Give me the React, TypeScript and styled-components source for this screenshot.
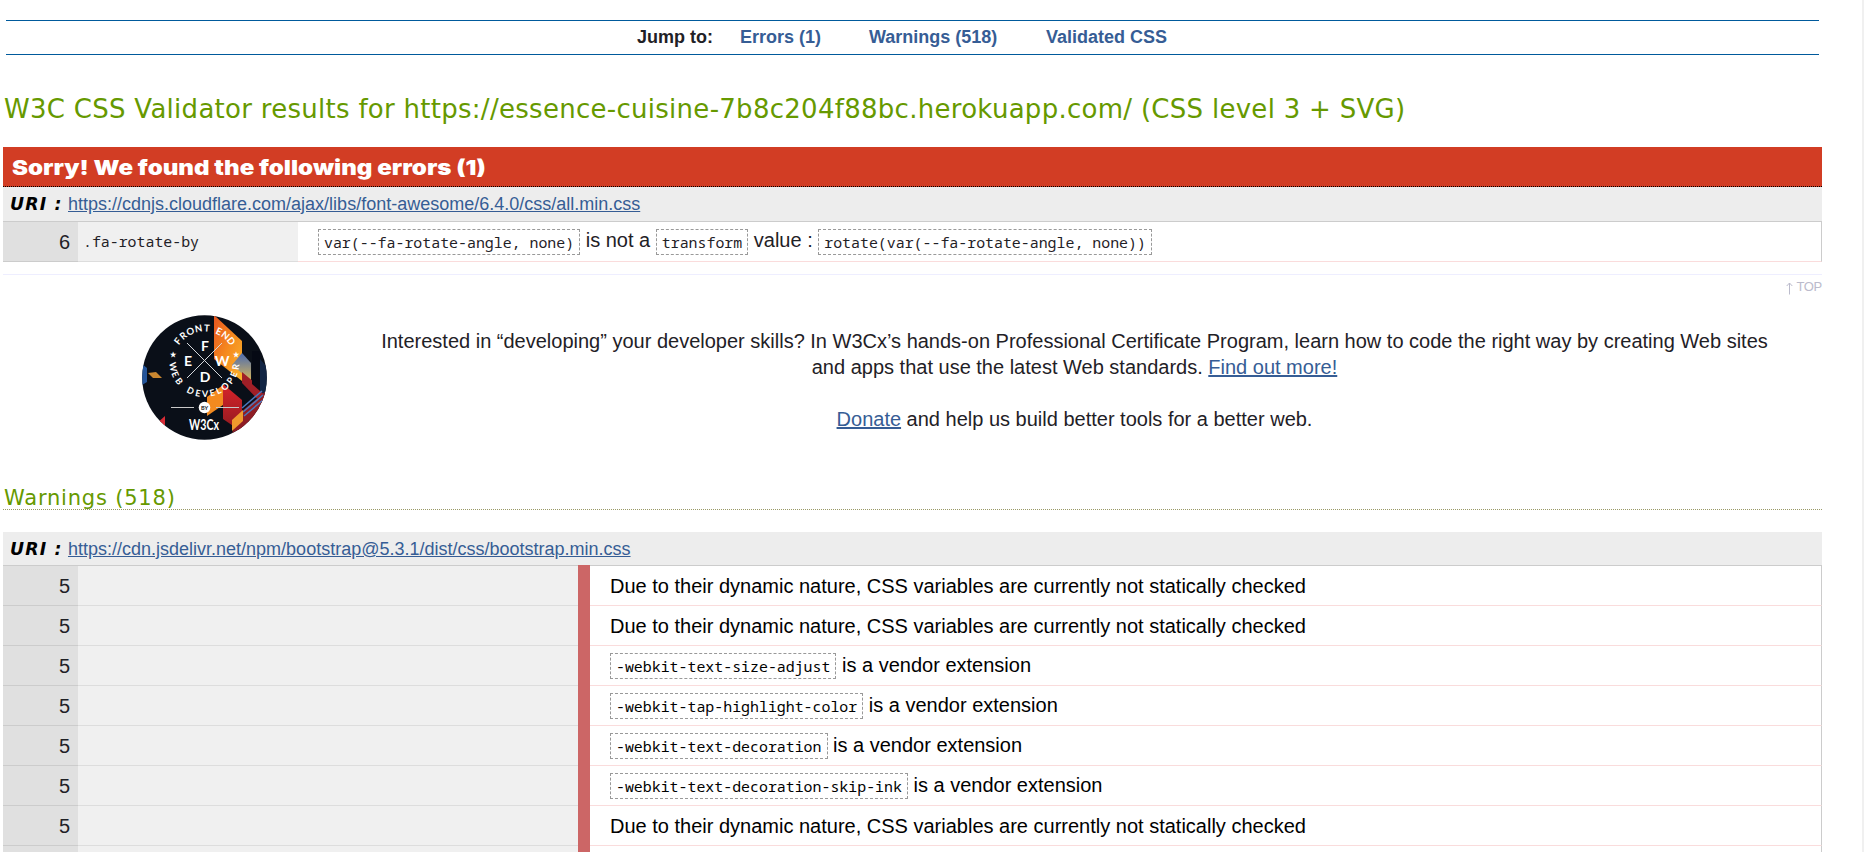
import React from 'react';
import styled, { createGlobalStyle } from 'styled-components';

const Global = createGlobalStyle`
  body { margin: 0; background: #fff; overflow: hidden; color: #1f2126; font-family: "Liberation Sans", Arial, sans-serif; font-size: 20px; }
  * { box-sizing: border-box; }
`;
const verdana = 'Verdana, "DejaVu Sans", sans-serif';

const Page = styled.div`
  height: 852px;
  overflow: hidden;
  padding: 20px 40px 0 3px;
  border-right: 2px solid #f0f0f0;
`;
const Jump = styled.nav`
  display: flex;
  height: 35px;
  margin: 0 3px;
  padding: 0 0 0 631px;
  border-top: 1px solid #005a9c;
  border-bottom: 1px solid #005a9c;
  font-size: 18px;
  font-weight: bold;
  line-height: 33px;
  white-space: nowrap;
`;
const JumpItem = styled.a<{ $w: number }>`
  width: ${p => p.$w}px;
  color: #365d95;
`;
const JumpLabel = styled.span`
  width: 103px;
`;
const Title = styled.h1`
  margin: 0;
  height: 92px;
  padding: 36px 0 0 1px;
  font: 26px/36px ${verdana};
  letter-spacing: 0.28px;
  color: #690;
  white-space: nowrap;
`;
const ErrorHeading = styled.h2`
  margin: 0;
  height: 40px;
  padding-left: 9px;
  background: #d23d24;
  border-bottom: 1px dotted #000;
  color: #fff;
  font: 900 20.5px/41px Inter, sans-serif;
  white-space: nowrap;
  span { display: inline-block; transform: scaleX(1.174); transform-origin: left; }
`;
const UriBar = styled.h4<{ $h: number }>`
  display: flex;
  margin: 0;
  height: ${p => p.$h}px;
  padding-left: 7px;
  background: #ededed;
  line-height: 34px;
  font-weight: normal;
  white-space: nowrap;
`;
const UriLabel = styled.em`
  width: 58px;
  color: #000;
  font: italic bold 17.3px/34px ${verdana};
  letter-spacing: 1.2px;
`;
const UriLink = styled.a`
  color: #365d95;
  font-size: 18px;
  text-decoration: underline;
`;
const Table = styled.div`
  border-top: 1px solid #ccc;
`;
const Row = styled.div<{ $cols: string }>`
  display: grid;
  grid-template-columns: ${p => p.$cols};
  grid-template-rows: 40px;
  line-height: 40px;
  white-space: nowrap;
`;
const LineNo = styled.div`
  padding-right: 8px;
  background: #e0e0e0;
  border-bottom: 1px solid #ccc;
  text-align: right;
`;
const Context = styled.div`
  padding-left: 5px;
  background: #f0f0f0;
  border-bottom: 1px solid #ddd;
  font: 14.88px/38px "Noto Sans Mono", "Noto Sans Mono CJK SC", "DejaVu Sans Mono", monospace;
`;
const Stripe = styled.div`
  height: 41px;
  margin-top: -1px;
  background: #c66;
`;
const Message = styled.div<{ $dark?: boolean; $line?: number }>`
  display: flex;
  padding-left: 20px;
  border-bottom: 1px solid #fadcdc;
  border-right: 1px solid #ccc;
  line-height: ${p => p.$line ?? 40}px;
  white-space: pre;
  color: ${p => (p.$dark ? '#000' : 'inherit')};
`;
const Code = styled.code`
  height: 26px;
  margin-top: 7px;
  padding: 0 5px;
  border: 1px dashed #999;
  font: 14.9px/24px "Noto Sans Mono", "Noto Sans Mono CJK SC", "DejaVu Sans Mono", monospace;
`;
const TopLink = styled.div`
  display: flex;
  justify-content: flex-end;
  gap: 3px;
  height: 41px;
  margin-top: 12px;
  padding-top: 3px;
  border-top: 1px solid #eef;
  color: #bbbbcc;
  font-size: 13px;
  letter-spacing: -0.3px;
  line-height: 18px;
  svg { margin-top: 4px; }
`;
const Promo = styled.section`
  display: flex;
  height: 170px;
  padding-left: 139px;
`;
const PromoText = styled.div`
  flex: 1;
  margin-left: 60px;
  padding-top: 13px;
  line-height: 26px;
  text-align: center;
  white-space: nowrap;
  p { margin: 0 0 26px; }
  a { color: #365d95; text-decoration: underline; text-decoration-thickness: 2px; }
`;
const WarnTitle = styled.h3`
  margin: 0 0 22px;
  height: 25px;
  padding-left: 1px;
  border-bottom: 1px dotted #996;
  color: #690;
  font: 21px/27px ${verdana};
  letter-spacing: 0.8px;
`;

const Badge = () => (
  <svg width="125" height="125" viewBox="0 0 125 125">
    <defs>
      <clipPath id="disc"><circle cx="62.5" cy="62.5" r="62.3" /></clipPath>
      <linearGradient id="amber" x1="0" y1="0" x2="1" y2="1">
        <stop offset="0" stopColor="#e9541f" /><stop offset="0.5" stopColor="#f58a1f" /><stop offset="1" stopColor="#fbb52c" />
      </linearGradient>
      <linearGradient id="ruby" x1="0" y1="0" x2="0" y2="1">
        <stop offset="0" stopColor="#d8232a" /><stop offset="1" stopColor="#8e1a20" />
      </linearGradient>
      <linearGradient id="haze" x1="0" y1="0" x2="0" y2="1">
        <stop offset="0" stopColor="#4a6ab0" /><stop offset="1" stopColor="#d9b85a" />
      </linearGradient>
    </defs>
    <g clipPath="url(#disc)">
      <rect width="125" height="125" fill="#0a0f18" />
      <path d="M72 0 L100 26 V66 L72 44Z" fill="url(#amber)" />
      <path d="M100 38 L109 48 V66 L90 50Z" fill="url(#haze)" />
      <path d="M100 57 L125 78 V94 L100 68Z" fill="#a01f27" />
      <path d="M110 36 L118 36 V76 L110 69Z" fill="#050914" />
      <path d="M118 44 L125 52 V82 L118 76Z" fill="#122544" />
      <path d="M81 69 L100 85 V117 L81 104Z" fill="url(#ruby)" />
      <path d="M81 70 V90 L65 101 V82Z" fill="#f38a1f" />
      <path d="M100 96 L123 77 V103 L90 118Z" fill="#8e1d25" />
      <path d="M100 93 L120 76 M101 97 L121 80 M102 101 L121 85" stroke="#4a78bd" strokeWidth="1.5" />
      <path d="M90 105 L101 95 V106 L90 116Z" fill="#ef9b2d" />
      <path d="M0 49 L5 53 V67 L0 70Z" fill="#24559a" />
      <path d="M6 58 L14 57 L20 63 L11 63Z" fill="#c98730" />
      <path d="M14 109 L23 101 V110 L20 112Z" fill="#d92c36" />
      <path d="M45 28 L80 63 M80 28 L45 63" stroke="#d5d8dc" strokeWidth="1" />
      <path d="M29 92.5 H52 M74 92.5 H97" stroke="#c9c9c9" strokeWidth="1" />
      <circle cx="62.5" cy="92.5" r="5.8" fill="#fff" />
      <g fill="#fff" fontFamily="Lato, sans-serif" fontWeight="700" textAnchor="middle">
        <g fontSize="14">
          <text x="63" y="35.5">F</text><text x="46" y="50.5">E</text>
          <text x="80" y="50.5">W</text><text x="63" y="66.5">D</text>
        </g>
        {[['F', -52], ['R', -39], ['O', -25], ['N', -10], ['T', 4], ['E', 25], ['N', 38], ['D', 52]].map(([c, a], i) => (
          <text key={i} fontSize="9.5" x="62.5" y="16.5" transform={`rotate(${a} 62.5 47)`}>{c}</text>
        ))}
        {[['W', 81], ['E', 67], ['B', 53], ['D', 26], ['E', 12], ['V', -1], ['E', -14], ['L', -26], ['O', -40], ['P', -54], ['E', -67], ['R', -81]].map(([c, a], i) => (
          <text key={i} fontSize="9" x="62.5" y="82" transform={`rotate(${a} 62.5 47)`}>{c}</text>
        ))}
        <text fontSize="7" x="31" y="42">★</text><text fontSize="7" x="94" y="42">★</text>
        <text fontSize="5.5" x="62.5" y="94.6" fill="#111">BY</text>
        <text fontSize="15" x="62" y="115" textLength="30" lengthAdjust="spacingAndGlyphs">W3Cx</text>
      </g>
    </g>
  </svg>
);

const dynamic = 'Due to their dynamic nature, CSS variables are currently not statically checked';
const warnings: (string | null)[] = [
  null, null, '-webkit-text-size-adjust', '-webkit-tap-highlight-color',
  '-webkit-text-decoration', '-webkit-text-decoration-skip-ink', null,
];
const warnCols = '75px 500px 12px 1fr';

export default function App() {
  return (
    <>
      <Global />
      <Page>
        <Jump>
          <JumpLabel>Jump to:</JumpLabel>
          <JumpItem $w={129}>Errors (1)</JumpItem>
          <JumpItem $w={177}>Warnings (518)</JumpItem>
          <JumpItem $w={124}>Validated CSS</JumpItem>
        </Jump>
        <Title>W3C CSS Validator results for https://essence-cuisine-7b8c204f88bc.herokuapp.com/ (CSS level 3 + SVG)</Title>
        <ErrorHeading><span>Sorry! We found the following errors (1)</span></ErrorHeading>
        <UriBar $h={34}>
          <UriLabel>URI :</UriLabel>
          <UriLink>https://cdnjs.cloudflare.com/ajax/libs/font-awesome/6.4.0/css/all.min.css</UriLink>
        </UriBar>
        <Table>
          <Row $cols="75px 220px 1fr">
            <LineNo>6</LineNo>
            <Context>.fa-rotate-by</Context>
            <Message $line={36}>
              <Code>var(--fa-rotate-angle, none)</Code>{' is not a '}<Code>transform</Code>{' value : '}<Code>rotate(var(--fa-rotate-angle, none))</Code>
            </Message>
          </Row>
        </Table>
        <TopLink>
          <svg width="7" height="13" viewBox="0 0 7 13" fill="none" stroke="#bbbbcc">
            <path d="M3.5 12.5 V1 M0.7 4 L3.5 1 L6.3 4" />
          </svg>
          TOP
        </TopLink>
        <Promo>
          <Badge />
          <PromoText>
            <p>
              Interested in “developing” your developer skills? In W3Cx’s hands-on Professional Certificate Program, learn how to code the right way by creating Web sites
              <br />
              and apps that use the latest Web standards. <a>Find out more!</a>
            </p>
            <p><a>Donate</a> and help us build better tools for a better web.</p>
          </PromoText>
        </Promo>
        <WarnTitle>Warnings (518)</WarnTitle>
        <UriBar $h={33}>
          <UriLabel>URI :</UriLabel>
          <UriLink>https://cdn.jsdelivr.net/npm/bootstrap@5.3.1/dist/css/bootstrap.min.css</UriLink>
        </UriBar>
        <Table>
          {warnings.map((w, i) => (
            <Row key={i} $cols={warnCols}>
              <LineNo>5</LineNo>
              <Context />
              <Stripe />
              <Message $dark $line={w ? 38 : 40}>{w ? <><Code>{w}</Code>{' is a vendor extension'}</> : dynamic}</Message>
            </Row>
          ))}
          <Row $cols={warnCols}>
            <LineNo />
            <Context />
            <Stripe />
            <Message />
          </Row>
        </Table>
      </Page>
    </>
  );
}
